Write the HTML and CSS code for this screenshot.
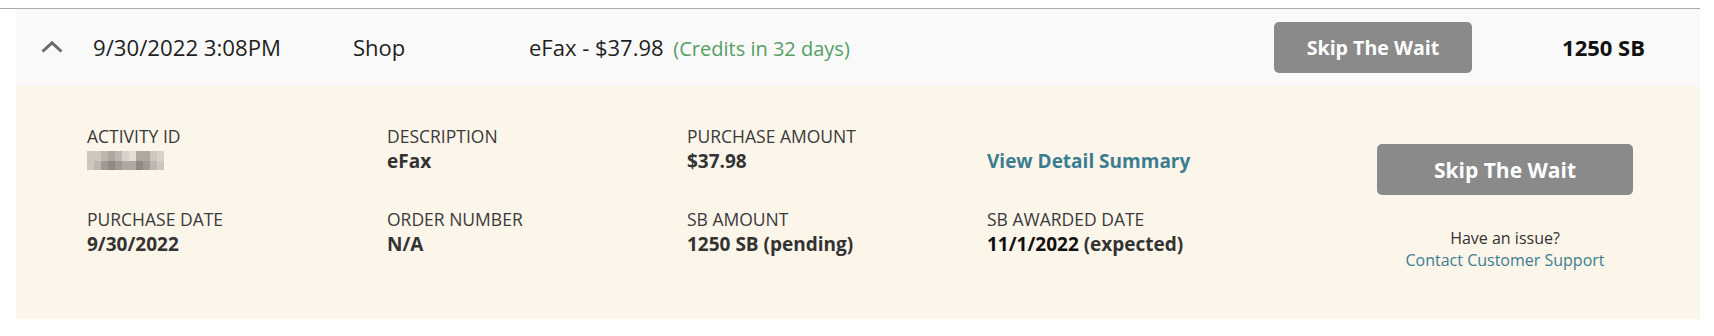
FILE: index.html
```html
<!DOCTYPE html>
<html lang="en">
<head>
<meta charset="utf-8">
<title>Activity</title>
<link rel="stylesheet" href="styles.css">
</head>
<body>
<div class="page">
  <div class="divider"></div>
  <div class="activity">
    <div class="summary">
      <div class="toggle">
        <svg class="chevron" width="22" height="12" viewBox="0 0 22 12" aria-hidden="true">
          <polyline points="1.5,10.5 11,1.8 20.5,10.5" fill="none" stroke="#6b6b6b" stroke-width="3"/>
        </svg>
      </div>
      <div class="date">9/30/2022 3:08PM</div>
      <div class="type">Shop</div>
      <div class="desc">eFax - $37.98 <span class="credits">(Credits in 32 days)</span></div>
      <button class="skip skip-small" type="button">Skip The Wait</button>
      <div class="points">1250 SB</div>
    </div>
    <div class="details">
      <div class="fields">
        <div class="field">
          <div class="label">Activity ID</div>
          <div class="value">
            <span class="mosaic">
              <span class="c2"></span><span class="c2"></span><span class="c3"></span><span class="c4"></span><span class="c3"></span><span class="c1"></span><span class="c0"></span><span class="c4"></span><span class="c4"></span><span class="c2"></span><span class="c1"></span>
              <span class="c2"></span><span class="c3"></span><span class="c5"></span><span class="c6"></span><span class="c5"></span><span class="c4"></span><span class="c4"></span><span class="c6"></span><span class="c5"></span><span class="c3"></span><span class="c2"></span>
            </span>
          </div>
        </div>
        <div class="field">
          <div class="label">Description</div>
          <div class="value">eFax</div>
        </div>
        <div class="field">
          <div class="label">Purchase Amount</div>
          <div class="value">$37.98</div>
        </div>
        <div class="field">
          <div class="label">&nbsp;</div>
          <div class="value"><a class="detail-link" href="#">View Detail Summary</a></div>
        </div>
        <div class="field">
          <div class="label">Purchase Date</div>
          <div class="value">9/30/2022</div>
        </div>
        <div class="field">
          <div class="label">Order Number</div>
          <div class="value">N/A</div>
        </div>
        <div class="field">
          <div class="label">SB Amount</div>
          <div class="value">1250 SB (pending)</div>
        </div>
        <div class="field">
          <div class="label">SB Awarded Date</div>
          <div class="value"><span class="strong-date">11/1/2022</span> (expected)</div>
        </div>
      </div>
      <div class="actions">
        <button class="skip skip-large" type="button">Skip The Wait</button>
        <div class="support">
          <div>Have an issue?</div>
          <a class="support-link" href="#">Contact Customer Support</a>
        </div>
      </div>
    </div>
  </div>
</div>
</body>
</html>
```

FILE: styles.css
```css
* { box-sizing: border-box; }

html, body {
  margin: 0;
  padding: 0;
  background: #ffffff;
}

body {
  font-family: "Open Sans", "Noto Sans", sans-serif;
  color: #222222;
}

.page {
  padding-top: 8px;
}

.divider {
  width: 1700px;
  height: 1px;
  background: #ababab;
}

.activity {
  margin-left: 16px;
  width: 1684px;
}

/* ---------- summary row ---------- */
.summary {
  display: flex;
  align-items: center;
  height: 77px;
  padding-bottom: 1px;
  background: #f9f9f9;
  font-size: 22px;
  color: #1f1f1f;
}

.toggle {
  width: 77px;
  flex-shrink: 0;
  padding-left: 25px;
  display: flex;
  align-items: center;
}

.chevron { display: block; }

.date {
  width: 260px;
  flex-shrink: 0;
  font-size: 22.2px;
}

.type {
  width: 176px;
  flex-shrink: 0;
}

.desc {
  flex: 1;
  white-space: nowrap;
}

.credits {
  color: #55a064;
  font-size: 20px;
  margin-left: 4px;
}

.skip {
  font-family: "Open Sans", "Noto Sans", sans-serif;
  font-weight: 700;
  color: #ffffff;
  background: #8a8a8a;
  border: none;
  border-radius: 5px;
  padding: 0;
  margin: 0;
  cursor: pointer;
}

.skip-small {
  width: 198px;
  height: 51px;
  font-size: 19.6px;
  flex-shrink: 0;
}

.points {
  width: 228px;
  flex-shrink: 0;
  padding-right: 55px;
  text-align: right;
  font-weight: 700;
  color: #111111;
}

/* ---------- details panel ---------- */
.details {
  display: flex;
  align-items: flex-start;
  height: 233px;
  overflow: hidden;
  background: #fcf5ea;
  padding: 38px 67px 0 71px;
}

.fields {
  display: grid;
  grid-template-columns: 300px 300px 300px 390px;
  grid-template-rows: 49px 49px;
  row-gap: 34px;
}

.field {
  height: 49px;
}

.label {
  height: 24px;
  font-size: 17.5px;
  line-height: 24px;
  text-transform: uppercase;
  color: #3a3a3a;
  white-space: nowrap;
}

.value {
  height: 25px;
  font-size: 19px;
  line-height: 27px;
  font-weight: 700;
  color: #333333;
  white-space: nowrap;
}

.strong-date { color: #111111; }

.detail-link {
  color: #3b7d90;
  text-decoration: none;
}

.mosaic {
  display: grid;
  grid-template-columns: repeat(11, 7px);
  grid-auto-rows: 9.5px;
  width: 77px;
  padding-top: 3px;
}

.mosaic span { display: block; }
.mosaic .c0 { background: #e4ded5; }
.mosaic .c1 { background: #d8d2c9; }
.mosaic .c2 { background: #cdc7be; }
.mosaic .c3 { background: #bdb7af; }
.mosaic .c4 { background: #aea8a0; }
.mosaic .c5 { background: #a09a93; }
.mosaic .c6 { background: #8f8a84; }

.actions {
  width: 256px;
  flex-shrink: 0;
  margin-top: 20px;
  display: flex;
  flex-direction: column;
  align-items: center;
}

.skip-large {
  width: 256px;
  height: 51px;
  font-size: 21px;
}

.support {
  margin-top: 32px;
  text-align: center;
  font-size: 16px;
  line-height: 22px;
  color: #333333;
}

.support-link {
  color: #3b7d90;
  text-decoration: none;
}
```
